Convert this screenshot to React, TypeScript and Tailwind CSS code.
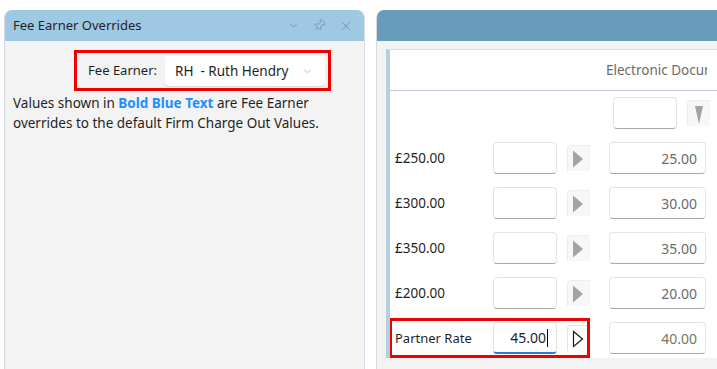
import { ChevronDown, X, Pin } from "lucide-react";

const font = { fontFamily: '"Noto Sans", "Open Sans", sans-serif' };

const rows = [
  { label: "£250.00", value: "25.00" },
  { label: "£300.00", value: "30.00" },
  { label: "£350.00", value: "35.00" },
  { label: "£200.00", value: "20.00" },
];

function ArrowButton({ active }: { active?: boolean }) {
  return (
    <div
      className={
        active
          ? "ml-[10px] mt-[3px] flex h-[26px] w-[23px] items-center justify-center rounded-tl-[4px] border border-[#e3e3e3] border-b-0 bg-white"
          : "ml-[10px] mt-[3px] flex h-[26px] w-[23px] items-center justify-center rounded-tl-[4px] border-l border-t border-[#ededed] bg-[#f7f7f7]"
      }
    >
      <svg width="12" height="18" viewBox="0 0 12 18" className="-ml-[2px]">
        {active ? (
          <path d="M1.5 1.5 L10.5 9 L1.5 16.5 Z" fill="white" stroke="#1a1a1a" strokeWidth="1.2" />
        ) : (
          <path d="M1 0.5 L11 9 L1 17.5 Z" fill="#a3a3a3" />
        )}
      </svg>
    </div>
  );
}

function Field({ value, className }: { value?: string; className: string }) {
  return (
    <div
      className={
        "flex h-[32px] items-center justify-end rounded-[4px] border border-[#e4e4e4] border-b-[#a8a8a8] bg-white pr-[8px] text-[14px] " +
        className
      }
    >
      {value}
    </div>
  );
}

export default function App() {
  return (
    <div className="flex h-[369px] w-[717px] overflow-hidden bg-white pl-[4px] pt-[10px] text-[#1f1f1f]" style={font}>
      {/* Fee earner overrides panel */}
      <div className="flex w-[361px] shrink-0 flex-col overflow-hidden rounded-t-[8px] border-x border-[#d9d8e6] bg-[#f3f3f3]">
        <div className="flex h-[31px] items-center bg-[#9fc8e3] pl-[8px] pr-[11px] text-[13px]">
          <span>Fee Earner Overrides</span>
          <div className="ml-auto flex items-center gap-[13px] text-[#6f8ea4]">
            <ChevronDown size={13} strokeWidth={1.6} />
            <Pin size={13} strokeWidth={1.4} className="rotate-45" />
            <X size={14} strokeWidth={1.4} />
          </div>
        </div>
        <div className="flex justify-end pr-[33px] pt-[9px]">
          <div className="flex items-center border-[3px] border-[#ee0000] pb-[2px] pl-[11px] pr-[3px] pt-[3px] text-[13.5px]">
            <span className="mr-[8px] text-[13px]">Fee Earner:</span>
            <div className="flex h-[30px] w-[160px] items-center rounded-[4px] bg-white pl-[10px] pr-[12px] shadow-[0_1px_1px_rgba(0,0,0,0.12)]">
              <span className="whitespace-pre">RH  - Ruth Hendry</span>
              <ChevronDown size={11} strokeWidth={1.5} className="ml-auto text-[#9a9a9a]" />
            </div>
          </div>
        </div>
        <p className="mt-[2px] pl-[8px] text-[13.5px] leading-[20px]">
          Values shown in <span className="font-bold text-[#1e8fff]">Bold Blue Text</span> are Fee Earner overrides to the default Firm Charge Out Values.
        </p>
      </div>

      {/* Charge out rates panel */}
      <div className="ml-[11px] flex w-[360px] shrink-0 flex-col overflow-hidden rounded-tl-[8px] border-l border-[#d9d8e6] bg-[#f3f3f3]">
        <div className="h-[31px] bg-[#689cbb]" />
        <div className="pl-[9px] pt-[8px]">
          <div className="h-[309px] overflow-hidden border-l-4 border-t border-[#b6cfe0] border-t-[#dcdcdc] bg-white text-[13.5px]">
            <div className="flex h-[41px] items-center border-b border-[#c9c5dc]">
              <div className="ml-[216px] w-[101px] overflow-hidden whitespace-nowrap text-[#6b6b6b]">Electronic Documents</div>
            </div>
            <div className="flex h-[45px] items-start pt-[6px]">
              <Field className="ml-[223px] w-[64px]" />
              <div className="ml-[10px] mt-[3px] flex h-[26px] w-[23px] items-center justify-center rounded-tl-[4px] border-l border-t border-[#ededed] bg-[#f7f7f7]">
                <svg width="10" height="20" viewBox="0 0 10 20">
                  <path d="M1 2 L9 2 L5 20 Z" fill="#a3a3a3" />
                </svg>
              </div>
            </div>
            {rows.map((r) => (
              <div key={r.label} className="flex h-[45px] items-start pt-[6px]">
                <div className="h-[32px] w-[103px] pl-[5px] leading-[32px]">{r.label}</div>
                <Field className="w-[64px]" />
                <ArrowButton />
                <Field value={r.value} className="ml-[19px] w-[97px] text-[#6b6b6b]" />
              </div>
            ))}
            <div className="relative flex h-[45px] items-start pt-[6px]">
              <div className="pointer-events-none absolute left-[-1px] top-[2px] h-[40px] w-[201px] border-[3px] border-[#ee0000]" />
              <div className="h-[32px] w-[103px] pl-[5px] text-[13px] leading-[32px]">Partner Rate</div>
              <div className="flex h-[32px] w-[64px] items-center justify-end rounded-[4px] border border-[#e4e4e4] border-b-2 border-b-[#2a7ed2] bg-white pr-[8px] text-[14px] text-[#1c1c3c]">
                45.00<span className="ml-[1px] h-[18px] w-px bg-black" />
              </div>
              <ArrowButton active />
              <Field value="40.00" className="ml-[19px] w-[97px] text-[#717b62]" />
            </div>
          </div>
        </div>
      </div>
    </div>
  );
}
